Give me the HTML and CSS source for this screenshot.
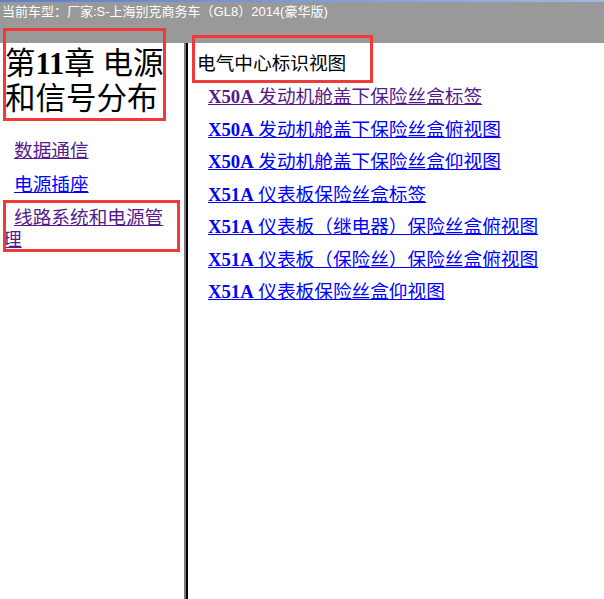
FILE: index.html
```html
<!DOCTYPE html>
<html>
<head>
<meta charset="UTF-8">
<title>电源和信号分布</title>

<link rel="stylesheet" href="styles.css">

</head>
<body>
	<!-- top bar with current model -->
	<div class="topbar">
		<div class="topline"></div>
		<div class="model">当前车型：厂家:S-上海别克商务车（GL8）2014(豪华版)</div>
	</div>

	<div class="frames">
		<!-- chapter menu -->
		<div class="menu">
			<h1 class="chapter">第<span class="num">11</span>章 电源和信号分布</h1>
			<p class="menuitem"><a href="#" class="visited">数据通信</a></p>
			<p class="menuitem"><a href="#">电源插座</a></p>
			<p class="menuitem"><a href="#" class="visited">线路系统和电源管理</a></p>
		</div>

		<div class="divider"></div>

		<!-- section content -->
		<div class="content">
			<h2 class="section">电气中心标识视图</h2>
			<p class="item"><a href="#" class="visited"><span class="code">X50A</span> 发动机舱盖下保险丝盒标签</a></p>
			<p class="item"><a href="#"><span class="code">X50A</span> 发动机舱盖下保险丝盒俯视图</a></p>
			<p class="item"><a href="#"><span class="code">X50A</span> 发动机舱盖下保险丝盒仰视图</a></p>
			<p class="item"><a href="#"><span class="code">X51A</span> 仪表板保险丝盒标签</a></p>
			<p class="item"><a href="#"><span class="code">X51A</span> 仪表板（继电器）保险丝盒俯视图</a></p>
			<p class="item"><a href="#"><span class="code">X51A</span> 仪表板（保险丝）保险丝盒俯视图</a></p>
			<p class="item"><a href="#"><span class="code">X51A</span> 仪表板保险丝盒仰视图</a></p>
		</div>
	</div>

	<!-- red marks drawn over the page -->
	<div class="mark mark-chapter"></div>
	<div class="mark mark-section"></div>
	<div class="mark mark-item"></div>
</body>
</html>
```

FILE: styles.css
```css
html, body {
	margin: 0;
	height: 100%;
}

body {
	font-family: "Liberation Serif", "Noto Sans CJK SC", serif;
	background-color: #ffffff;
	color: #000000;
	display: flex;
	flex-direction: column;
	overflow: hidden;
}

/* grey bar on top */
.topbar {
	background-color: #999999;
	height: 43px;
	flex-shrink: 0;
}

.topline {
	height: 2px;
	background: linear-gradient(to right, #5d80c6, #9fb8e4);
}

.model {
	color: #ffffff;
	font-family: "Liberation Sans", "Noto Sans CJK SC", sans-serif;
	font-size: 13px;
	line-height: 20px;
	padding-left: 2px;
	white-space: nowrap;
}

/* left and right frames */
.frames {
	flex: 1;
	display: flex;
}

.menu {
	width: 172px;
	padding: 0 9px 0 3px;
}

.divider {
	width: 2px;
	background-color: #7a7a7a;
	border-right: 2px solid #000000;
}

.content {
	flex: 1;
	padding-left: 9px;
}

.chapter {
	font-size: 30.5px;
	font-weight: normal;
	line-height: 35px;
	margin: 4px 0 23px 2px;
}

.chapter .num {
	font-weight: bold;
}

.menuitem {
	font-size: 18.67px;
	line-height: 22px;
	margin: 11.5px 0;
	text-indent: 11px;
}

.section {
	font-size: 18.67px;
	font-weight: normal;
	line-height: 22px;
	margin: 10px 0 11px 0;
}

.item {
	font-size: 18.67px;
	line-height: 22px;
	margin: 0 0 10.5px 11px;
	white-space: nowrap;
}

.code {
	font-weight: bold;
}

a {
	color: #0000ff;
	text-decoration: underline;
}

a.visited {
	color: #551a8b;
}

/* red outlines laid over the page */
.mark {
	position: absolute;
	border: 3px solid #f03a3a;
	box-sizing: border-box;
}

.mark-chapter {
	left: 3px;
	top: 28px;
	width: 163px;
	height: 93px;
}

.mark-section {
	left: 192px;
	top: 35px;
	width: 181px;
	height: 48px;
}

.mark-item {
	left: 3px;
	top: 200px;
	width: 177px;
	height: 52px;
}
```
